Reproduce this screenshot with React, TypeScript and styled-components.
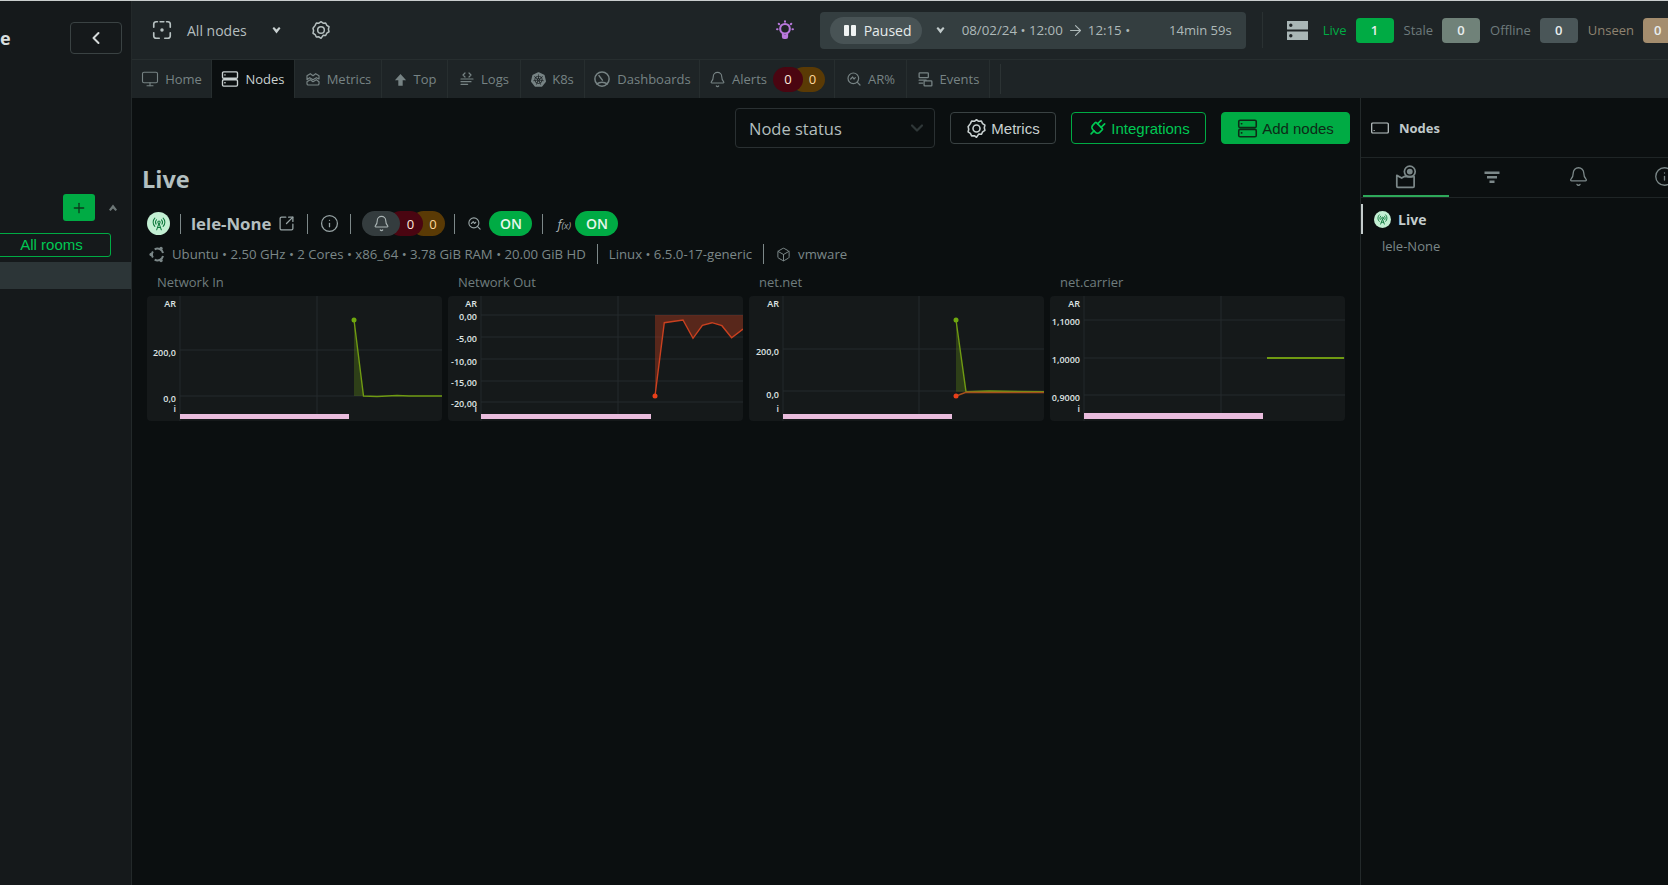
import React from "react";
import styled, { createGlobalStyle } from "styled-components";
import { Monitor, Bell, Plug, Info, SquareArrowOutUpRight, Box, RadioTower, ChevronLeft, ChevronDown, Plus, ArrowRight } from "lucide-react";
import { SiKubernetes } from "react-icons/si";

const Global = createGlobalStyle`
  html, body { margin: 0; padding: 0; height: 100%; background: #0b0f10; overflow: hidden; }
  body { font-family: "Open Sans", "Liberation Sans", sans-serif; color: #b8c2c2; }
  #root { height: 100%; }
  * { box-sizing: border-box; }
`;

const Page = styled.div`
  display: flex;
  width: 1668px;
  height: 885px;
  border-top: 1px solid #c9cdcd;
  overflow: hidden;
`;

const Sidebar = styled.aside`
  flex: 0 0 132px;
  background: #15191b;
  border-right: 1px solid #23292a;
  display: flex;
  flex-direction: column;
`;
const SideHead = styled.div`
  display: flex;
  align-items: center;
  justify-content: space-between;
  padding: 20px 9px 0 0;
  height: 53px;
`;
const SpaceName = styled.span`
  font-size: 18px;
  font-weight: 700;
  color: #d8dede;
  line-height: 24px;
  margin-top: 1px;
`;
const Collapse = styled.button`
  width: 52px;
  height: 32px;
  background: transparent;
  border: 1px solid #3a4243;
  border-radius: 4px;
  display: flex;
  align-items: center;
  justify-content: center;
  color: #d5dada;
  padding: 0;
`;
const RoomsHead = styled.div`
  display: flex;
  align-items: center;
  justify-content: flex-end;
  gap: 13px;
  margin-top: 140px;
  padding-right: 13px;
  color: #6c7676;
`;
const AddRoom = styled.button`
  width: 32px;
  height: 27px;
  background: #00ab44;
  border: 0;
  border-radius: 3px;
  color: #0b3a1c;
  display: flex;
  align-items: center;
  justify-content: center;
  padding: 0;
`;
const AllRooms = styled.div`
  margin: 12px 20px 0 -8px;
  height: 24px;
  border: 1px solid #00ab44;
  border-radius: 3px;
  color: #00c853;
  font-family: "Liberation Sans", sans-serif;
  font-size: 15px;
  line-height: 22px;
  text-align: center;
`;
const RoomRow = styled.div`
  margin-top: 5px;
  height: 27px;
  background: #2c3537;
`;

const Main = styled.div`
  flex: 1;
  min-width: 0;
  display: flex;
  flex-direction: column;
`;
const TopBar = styled.header`
  height: 59px;
  flex: none;
  background: #1e2426;
  border-bottom: 1px solid #272e2f;
  display: flex;
  align-items: center;
  padding-left: 19px;
`;
const ScopeLabel = styled.span`
  font-size: 14px;
  color: #b5bfbf;
  margin-left: 14px;
`;
const ScopeChevron = styled.span`
  display: flex;
  margin-left: 25px;
  color: #c8d0d0;
`;
const GearWrap = styled.span`
  display: flex;
  margin-left: 30px;
  color: #b5bfbf;
`;
const Bulb = styled.span`
  display: flex;
  margin-left: auto;
  margin-right: 25px;
  color: #b878dc;
`;
const TimePicker = styled.div`
  width: 426px;
  height: 37px;
  background: #343e40;
  border-radius: 4px;
  display: flex;
  align-items: center;
  padding-left: 10px;
  font-size: 13px;
  color: #aeb9b9;
`;
const PausedPill = styled.div`
  width: 92px;
  height: 27px;
  background: #485355;
  border-radius: 14px;
  display: flex;
  align-items: center;
  gap: 8px;
  padding-left: 14px;
  font-size: 14px;
  color: #e6ebeb;
`;
const PauseGlyph = styled.span`
  display: flex;
  gap: 2px;
`;
const PauseBar = styled.i`
  display: block;
  width: 5px;
  height: 11px;
  border-radius: 1px;
  background: #f0f3f3;
`;
const TimeChevron = styled.span`
  display: flex;
  margin: 0 17px 0 14px;
  color: #c0caca;
`;
const TimeRange = styled.span`
  display: flex;
  align-items: center;
  gap: 4px;
  font-size: 13.300px;
`;
const Duration = styled.span`
  margin-left: auto;
  margin-right: 14px;
`;
const BarDivider = styled.i`
  display: block;
  width: 1px;
  height: 36px;
  background: #2a3132;
  margin: 0 24px 0 16px;
`;
const StatusGroup = styled.div`
  display: flex;
  align-items: center;
  flex: none;
`;
const StatusLabel = styled.span<{ $c: string; $first?: boolean }>`
  font-size: 13px;
  color: ${(p) => p.$c};
  margin-left: ${(p) => (p.$first ? 15 : 10)}px;
  margin-right: 9px;
`;
const StatusChip = styled.span<{ $c: string; $w?: number }>`
  width: ${(p) => p.$w ?? 38}px;
  height: 25px;
  flex: none;
  background: ${(p) => p.$c};
  border-radius: 4px;
  color: #e8eeee;
  font-size: 13px;
  font-weight: 600;
  display: flex;
  align-items: center;
  justify-content: center;
`;
const ClippedChip = styled(StatusChip)`
  border-radius: 4px 0 0 4px;
  justify-content: flex-start;
  padding-left: 11px;
`;

const TabBar = styled.nav`
  height: 38px;
  flex: none;
  background: #1e2426;
  display: flex;
`;
const Tab = styled.div<{ $w: number; $active?: boolean }>`
  flex: 0 0 ${(p) => p.$w}px;
  display: flex;
  align-items: center;
  justify-content: center;
  gap: 6px;
  font-size: 13px;
  color: ${(p) => (p.$active ? "#c9d1d1" : "#778384")};
  background: ${(p) => (p.$active ? "#0b0f10" : "transparent")};
  border-right: 1px solid #272e2f;
  white-space: nowrap;
`;
const TabEnd = styled.i`
  display: block;
  width: 1px;
  height: 30px;
  align-self: center;
  background: #2c3334;
  margin-left: 10px;
`;
const CountGroup = styled.span`
  display: flex;
`;
const Count = styled.span<{ $bg: string; $c: string; $w: number; $over?: boolean; $z: number }>`
  position: relative;
  z-index: ${(p) => p.$z};
  width: ${(p) => p.$w}px;
  height: 25px;
  border-radius: 13px;
  background: ${(p) => p.$bg};
  color: ${(p) => p.$c};
  font-size: 13px;
  display: flex;
  align-items: center;
  justify-content: center;
  margin-left: ${(p) => (p.$over ? "-12px" : "0")};
  padding-left: ${(p) => (p.$over ? "9px" : "0")};
`;

const Body = styled.div`
  flex: 1;
  min-height: 0;
  display: flex;
  background: #0b0f10;
`;
const Content = styled.main`
  flex: 0 0 1228px;
  padding: 10px 10px 0 15px;
`;
const Toolbar = styled.div`
  display: flex;
  justify-content: flex-end;
  align-items: center;
  height: 40px;
  gap: 15px;
`;
const SelectBox = styled.div`
  width: 200px;
  height: 40px;
  border: 1px solid #2a3032;
  border-radius: 4px;
  display: flex;
  align-items: center;
  justify-content: space-between;
  padding: 0 7px 0 13px;
  font-size: 16.500px;
  color: #b3bebe;
`;
const ActionButton = styled.button<{ $variant: "plain" | "outline" | "solid"; $w: number }>`
  width: ${(p) => p.$w}px;
  height: 32px;
  border-radius: 4px;
  display: flex;
  align-items: center;
  justify-content: center;
  gap: 4px;
  font-family: "Liberation Sans", sans-serif;
  font-size: 15px;
  padding: 0;
  border: 1px solid ${(p) => (p.$variant === "plain" ? "#3a4243" : "#00ab44")};
  color: ${(p) => (p.$variant === "plain" ? "#c9d1d1" : p.$variant === "outline" ? "#00c853" : "#0d2a17")};
  background: ${(p) => (p.$variant === "solid" ? "#00ab44" : "transparent")};
`;
const Title = styled.h1`
  margin: 17px 0 0 -5px;
  font-size: 23.500px;
  line-height: 28px;
  font-weight: 700;
  color: #b3bfc0;
`;
const NodeRow = styled.div`
  display: flex;
  align-items: center;
  height: 25px;
  margin-top: 18px;
`;
const NodeBadge = styled.span<{ $size: number }>`
  width: ${(p) => p.$size}px;
  height: ${(p) => p.$size}px;
  border-radius: 50%;
  background: #c3efd3;
  color: #0f7a3d;
  display: flex;
  align-items: center;
  justify-content: center;
  flex: none;
`;
const VSep = styled.i<{ $l: number; $r: number; $h?: number }>`
  display: block;
  flex: none;
  width: 1px;
  height: ${(p) => p.$h ?? 20}px;
  background: #7d8889;
  margin: 0 ${(p) => p.$r}px 0 ${(p) => p.$l}px;
`;
const NodeName = styled.span`
  font-size: 16.800px;
  font-weight: 700;
  color: #b4bfc0;
  margin-right: 7px;
`;
const MutedIcon = styled.span`
  display: flex;
  color: #97a3a4;
`;
const AlertPill = styled.span`
  display: flex;
  align-items: center;
`;
const BellSegment = styled.span`
  position: relative;
  z-index: 3;
  width: 38px;
  height: 25px;
  border-radius: 13px;
  background: #343c3e;
  color: #aab4b4;
  display: flex;
  align-items: center;
  justify-content: center;
`;
const OnPill = styled.span`
  width: 43px;
  height: 25px;
  border-radius: 13px;
  background: #00ab44;
  color: #e6f7ec;
  font-size: 14px;
  font-weight: 600;
  display: flex;
  align-items: center;
  justify-content: center;
  margin-left: 7px;
`;
const Fx = styled.span`
  display: flex;
  align-items: baseline;
  width: 15px;
  margin-right: -4px;
  font-size: 13px;
  font-style: italic;
  color: #a8b3b4;
`;
const FxArg = styled.span`
  font-size: 9px;
`;
const InfoRow = styled.div`
  display: flex;
  align-items: center;
  height: 20px;
  margin-top: 8px;
  margin-left: 2px;
  font-size: 13.200px;
  color: #7b8788;
  white-space: nowrap;
`;
const InfoText = styled.span<{ $l: number }>`
  margin-left: ${(p) => p.$l}px;
`;
const Charts = styled.section`
  display: grid;
  grid-template-columns: repeat(4, 1fr);
  gap: 6px;
  margin-top: 9px;
  margin-right: 5px;
`;
const ChartTitle = styled.div`
  font-size: 13px;
  line-height: 18px;
  color: #6f7d7e;
  padding-left: 10px;
  margin-bottom: 5px;
`;
const ChartCard = styled.div`
  height: 125px;
  background: #15191a;
  border-radius: 4px;
  overflow: hidden;
`;
const ChartSvg = styled.svg`
  display: block;
  width: 100%;
  height: 125px;
  font-family: "Open Sans", sans-serif;
  font-size: 9px;
  font-weight: 600;
  fill: #dfe4e4;
`;

const Panel = styled.aside`
  flex: 1;
  min-width: 0;
  border-left: 1px solid #23292a;
  overflow: hidden;
`;
const PanelHead = styled.div`
  height: 60px;
  border-bottom: 1px solid #1f2526;
  display: flex;
  align-items: center;
  gap: 10px;
  padding-left: 10px;
  font-size: 13px;
  font-weight: 700;
  color: #c0c9ca;
`;
const PanelTabs = styled.div`
  height: 40px;
  display: flex;
  border-bottom: 1px solid #1f2526;
  padding-left: 2px;
  width: 360px;
`;
const PanelTab = styled.div<{ $active?: boolean }>`
  flex: 0 0 86px;
  display: flex;
  align-items: center;
  justify-content: center;
  color: #7c8889;
  border-bottom: 2px solid ${(p) => (p.$active ? "#2ea85a" : "transparent")};
`;
const GroupRow = styled.div`
  display: flex;
  align-items: center;
  gap: 7px;
  height: 30px;
  margin-top: 6px;
  border-left: 2px solid #c4cccc;
  padding-left: 11px;
  font-size: 14px;
  font-weight: 700;
  color: #c3cccc;
`;
const NodeItem = styled.div`
  font-size: 13px;
  color: #7b8788;
  padding-left: 21px;
  margin-top: 2px;
  line-height: 20px;
`;

const Icon = ({ s = 18, children, vb = "0 0 24 24" }: { s?: number; children: React.ReactNode; vb?: string }) => (
  <svg width={s} height={s} viewBox={vb} fill="none" stroke="currentColor" strokeWidth={1.8} strokeLinecap="round" strokeLinejoin="round">
    {children}
  </svg>
);
const ServerIcon = ({ s = 18 }: { s?: number }) => (
  <Icon s={s}>
    <rect x="2" y="2.500" width="20" height="8.500" rx="1.500" />
    <rect x="2" y="13" width="20" height="8.500" rx="1.500" />
    <path d="M5 17h.5M5 6.500h.5" />
  </Icon>
);
const HexGear = ({ s = 20 }: { s?: number }) => (
  <Icon s={s}>
    <path d="M12 2l2.500 1.800 3.100-.2 1.400 2.800 2.600 1.700-.7 3 .7 3-2.600 1.700-1.400 2.800-3.100-.2L12 22l-2.500-1.800-3.100.2L5 17.600l-2.600-1.700.7-3-.7-3L5 6.400l1.400-2.800 3.100.2z" />
    <circle cx="12" cy="12" r="4" />
  </Icon>
);
const ScopeIcon = () => (
  <Icon s={22}>
    <path d="M7 3H5.500A2.500 2.500 0 0 0 3 5.500V9M17 3h1.500A2.500 2.500 0 0 1 21 5.500V9M3 15v3.500A2.500 2.500 0 0 0 5.500 21H9M21 15v3.500a2.500 2.500 0 0 1-2.500 2.500H15M10 3h4" />
    <circle cx="12" cy="12" r="1" fill="currentColor" />
  </Icon>
);
const BulbIcon = () => (
  <Icon s={20}>
    <g strokeWidth="2.500">
      <circle cx="12" cy="10.500" r="5.800" />
      <path d="M9.500 16.500v3.500a1.500 1.500 0 0 0 1.500 1.500h2a1.500 1.500 0 0 0 1.500-1.500v-3.500M9.500 19h5M12 1.500v.5M4.500 4.500l.5.5M19.500 4.500l-.5.5M2.500 11h.5M21.500 11h-.5" />
    </g>
  </Icon>
);
const MetricsIcon = () => (
  <Icon s={16}>
    <path d="M3 7l5-3 4 3 4-3 5 3v5l-4-2-5 3-5-3-4 3zM3 16l5-3 4 3 5-3 4 3v3a2 2 0 0 1-2 2H5a2 2 0 0 1-2-2z" />
  </Icon>
);
const TopIcon = () => (
  <svg width="15" height="15" viewBox="0 0 24 24" fill="currentColor"><path d="M12 3l9 10h-5.500v9h-7v-9H3z" /></svg>
);
const LogsIcon = () => (
  <Icon s={16}>
    <path d="M9 3L6 6l3 3M15 3l3 3-3 3M3 12h18M3 16h15M3 20h10" />
  </Icon>
);
const DashGauge = () => (
  <Icon s={18}>
    <circle cx="12" cy="12" r="9.500" strokeWidth="2" />
    <path d="M5 18.500c2-1.500 4.300-2.300 7-2.300s5 .8 7 2.300" strokeWidth="2" />
    <path d="M8 7.500l4.500 6" strokeWidth="2" />
  </Icon>
);
const ZoomPct = ({ s = 16 }: { s?: number }) => (
  <Icon s={s}>
    <circle cx="11" cy="11" r="8" />
    <path d="M21 21l-4.300-4.300M7 12l3-3 2 3 2-2" />
  </Icon>
);
const EventsIcon = () => (
  <Icon s={17}>
    <rect x="3" y="2.500" width="13" height="7" rx="1" />
    <path d="M3 13h10M3 17h5" />
    <rect x="10" y="14" width="11" height="7" rx="1" />
  </Icon>
);
const UbuntuIcon = () => (
  <svg width="17" height="17" viewBox="0 0 24 24" fill="none" stroke="currentColor">
    <path d="M8 4.800A8 8 0 0 1 19.800 10M19.800 14A8 8 0 0 1 8 19.200M5.500 16.300a8 8 0 0 1 0-8.600" strokeWidth="2.800" />
    <circle cx="3" cy="12" r="2.400" fill="currentColor" stroke="none" />
    <circle cx="17" cy="3.500" r="2.400" fill="currentColor" stroke="none" />
    <circle cx="17" cy="20.500" r="2.400" fill="currentColor" stroke="none" />
  </svg>
);
const FolderEye = () => (
  <Icon s={26}>
    <path d="M3.500 10.500L8 13l2.500-1.500 9 .2v8.800a1 1 0 0 1-1 1H4.500a1 1 0 0 1-1-1z" strokeWidth="1.600" />
    <circle cx="15.500" cy="7" r="5" strokeWidth="1.600" />
    <circle cx="15.500" cy="7" r="1.800" fill="currentColor" />
  </Icon>
);
const FilterIcon = () => (
  <svg width="16" height="14" viewBox="0 0 16 14" fill="currentColor">
    <rect x="0.500" y="1.500" width="15" height="2.500" />
    <rect x="3" y="6" width="10" height="2.500" />
    <rect x="5.500" y="10.500" width="5" height="2.500" />
  </svg>
);
const SmallChevron = () => (
  <svg width="9" height="7" viewBox="0 0 9 7" fill="currentColor"><path d="M0.500 1.200L2 0l2.500 2.500L7 0l1.500 1.200L4.500 6.500z" /></svg>
);
const SmallChevronUp = () => (
  <svg width="10" height="7" viewBox="0 0 9 7" fill="currentColor"><path d="M0.500 5.800L2 7l2.500-2.500L7 7l1.500-1.200L4.500 .5z" /></svg>
);
const StackIcon = () => (
  <svg width="21" height="21" viewBox="0 0 21 21" fill="#a9b6b6">
    <path fillRule="evenodd" d="M0 1h21v8.500H0zM5.500 5.200a1.700 1.700 0 1 1-3.400 0 1.700 1.700 0 0 1 3.400 0zM0 11.500h21V20H0zM5.500 15.700a1.700 1.700 0 1 1-3.400 0 1.700 1.700 0 0 1 3.400 0z" />
  </svg>
);
const RectIcon = () => (
  <Icon s={18} vb="0 0 18 12">
    <rect x="0.700" y="1" width="16.600" height="10" rx="1" strokeWidth="1.200" />
    <path d="M3 8.500h.3" strokeWidth="1" />
  </Icon>
);

type Series = { pts: [number, number][]; stroke: string; dot?: string; area?: string; areaBase?: number; width?: number };
type ChartDef = {
  title: string;
  axis: number;
  vgrid: number;
  grid: number[];
  labels: { y: number; t: string }[];
  barEnd: number;
  barTop?: number;
  series: Series[];
};

const charts: ChartDef[] = [
  {
    title: "Network In", axis: 33, vgrid: 170, grid: [54, 100], barEnd: 202,
    labels: [{ y: 60, t: "200,0" }, { y: 106, t: "0,0" }],
    series: [{
      pts: [[207, 24], [216.500, 100], [230, 100.500], [240, 100], [250, 99.500], [262, 100], [280, 100], [295, 100]],
      stroke: "#6f9a12", dot: "#6fa80f", area: "rgba(111,160,20,.28)", areaBase: 100,
    }],
  },
  {
    title: "Network Out", axis: 33, vgrid: 170, grid: [19, 41, 63, 85, 106], barEnd: 203,
    labels: [{ y: 24, t: "0,00" }, { y: 46, t: "-5,00" }, { y: 69, t: "-10,00" }, { y: 90, t: "-15,00" }, { y: 111, t: "-20,00" }],
    series: [{
      pts: [[207, 100], [216.300, 26.700], [235, 24], [245, 42.300], [254.400, 29.300], [264, 26.700], [273.900, 29.700], [283.600, 41.700], [295, 33]],
      stroke: "#c9401f", dot: "#e8401a", area: "rgba(190,60,30,.4)", areaBase: 19,
    }],
  },
  {
    title: "net.net", axis: 34, vgrid: 170, grid: [53, 95], barEnd: 203,
    labels: [{ y: 59, t: "200,0" }, { y: 102, t: "0,0" }],
    series: [
      {
        pts: [[207, 24], [217, 95.700], [240, 95], [295, 95.700]],
        stroke: "#6f9a12", dot: "#6fa80f", area: "rgba(111,160,20,.28)", areaBase: 95.700,
      },
      { pts: [[207, 100], [217, 96.300], [295, 96.500]], stroke: "#a5501c", dot: "#e8401a" },
    ],
  },
  {
    title: "net.carrier", axis: 34, vgrid: 171, grid: [24, 62, 99], barEnd: 213,
    barTop: 117,
    labels: [{ y: 29, t: "1,1000" }, { y: 67, t: "1,0000" }, { y: 105, t: "0,9000" }],
    series: [{ pts: [[217, 62], [294, 62]], stroke: "#6f9a12", width: 2 }],
  },
];

const Chart = ({ def }: { def: ChartDef }) => {
  const right = def.axis - 4;
  const barTop = def.barTop ?? 118;
  return (
    <div>
      <ChartTitle>{def.title}</ChartTitle>
      <ChartCard>
        <ChartSvg viewBox="0 0 295 125" preserveAspectRatio="none">
          <line x1={def.axis} x2={def.axis} y1="0" y2="125" stroke="#22282a" />
          <line x1={def.vgrid} x2={def.vgrid} y1="0" y2="118" stroke="#252b2c" />
          {def.grid.map((y) => (
            <line key={y} x1={def.axis} x2="295" y1={y} y2={y} stroke="#252b2c" />
          ))}
          <text x={right} y="11" textAnchor="end">AR</text>
          {def.labels.map((l) => (
            <text key={l.t} x={right} y={l.y} textAnchor="end">{l.t}</text>
          ))}
          <text x={right} y="116" textAnchor="end">i</text>
          {def.series.map((s, i) => (
            <g key={i}>
              {s.area && (
                <polygon
                  points={`${s.pts[0][0]},${s.areaBase} ${s.pts.map((p) => p.join(",")).join(" ")} ${s.pts[s.pts.length - 1][0]},${s.areaBase}`}
                  fill={s.area}
                />
              )}
              <polyline points={s.pts.map((p) => p.join(",")).join(" ")} fill="none" stroke={s.stroke} strokeWidth={s.width ?? 1.400} />
              {s.dot && <circle cx={s.pts[0][0]} cy={s.pts[0][1]} r="2.500" fill={s.dot} />}
            </g>
          ))}
          <rect x={def.axis} y={barTop} width={def.barEnd - def.axis} height={123 - barTop} fill="#e9bcdd" />
        </ChartSvg>
      </ChartCard>
    </div>
  );
};

export default function App() {
  return (
    <Page>
      <Global />
      <Sidebar>
        <SideHead>
          <SpaceName>e</SpaceName>
          <Collapse><ChevronLeft size={20} strokeWidth={2.400} /></Collapse>
        </SideHead>
        <RoomsHead>
          <AddRoom><Plus size={16} strokeWidth={2} /></AddRoom>
          <SmallChevronUp />
        </RoomsHead>
        <AllRooms>All rooms</AllRooms>
        <RoomRow />
      </Sidebar>
      <Main>
        <TopBar>
          <ScopeIcon />
          <ScopeLabel>All nodes</ScopeLabel>
          <ScopeChevron><SmallChevron /></ScopeChevron>
          <GearWrap><HexGear /></GearWrap>
          <Bulb><BulbIcon /></Bulb>
          <TimePicker>
            <PausedPill>
              <PauseGlyph><PauseBar /><PauseBar /></PauseGlyph>
              Paused
            </PausedPill>
            <TimeChevron><SmallChevron /></TimeChevron>
            <TimeRange>08/02/24 • 12:00 <ArrowRight size={17} strokeWidth={1.500} /> 12:15 •</TimeRange>
            <Duration>14min 59s</Duration>
          </TimePicker>
          <BarDivider />
          <StatusGroup>
            <StackIcon />
            <StatusLabel $c="#00ab44" $first>Live</StatusLabel>
            <StatusChip $c="#00ab44">1</StatusChip>
            <StatusLabel $c="#6e7b7c">Stale</StatusLabel>
            <StatusChip $c="#708279">0</StatusChip>
            <StatusLabel $c="#6e7b7c">Offline</StatusLabel>
            <StatusChip $c="#4a5658">0</StatusChip>
            <StatusLabel $c="#8f8370">Unseen</StatusLabel>
            <ClippedChip $c="#a48d6e" $w={25}>0</ClippedChip>
          </StatusGroup>
        </TopBar>
        <TabBar>
          <Tab $w={80}><Monitor size={18} strokeWidth={1.500} />Home</Tab>
          <Tab $w={83} $active><ServerIcon />Nodes</Tab>
          <Tab $w={87}><MetricsIcon />Metrics</Tab>
          <Tab $w={66}><TopIcon />Top</Tab>
          <Tab $w={73}><LogsIcon />Logs</Tab>
          <Tab $w={64}><SiKubernetes size={15} />K8s</Tab>
          <Tab $w={115}><DashGauge />Dashboards</Tab>
          <Tab $w={135}>
            <Bell size={17} strokeWidth={1.600} />Alerts
            <CountGroup>
              <Count $bg="#4a0511" $c="#ffe9dc" $w={30} $z={2}>0</Count>
              <Count $bg="#5a3a05" $c="#ffd89a" $w={34} $over $z={1}>0</Count>
            </CountGroup>
          </Tab>
          <Tab $w={72}><ZoomPct />AR%</Tab>
          <Tab $w={83}><EventsIcon />Events</Tab>
          <TabEnd />
        </TabBar>
        <Body>
          <Content>
            <Toolbar>
              <SelectBox>
                Node status
                <ChevronDown size={20} color="#2f3738" strokeWidth={2.600} />
              </SelectBox>
              <ActionButton $variant="plain" $w={106}><HexGear s={21} />Metrics</ActionButton>
              <ActionButton $variant="outline" $w={135}><Plug size={20} style={{ transform: "rotate(45deg)" }} />Integrations</ActionButton>
              <ActionButton $variant="solid" $w={129}><ServerIcon s={21} />Add nodes</ActionButton>
            </Toolbar>
            <Title>Live</Title>
            <NodeRow>
              <NodeBadge $size={23}><RadioTower size={14} strokeWidth={1.800} /></NodeBadge>
              <VSep $l={10} $r={10} />
              <NodeName>lele-None</NodeName>
              <MutedIcon><SquareArrowOutUpRight size={17} strokeWidth={1.800} /></MutedIcon>
              <VSep $l={12} $r={12} />
              <MutedIcon><Info size={19} strokeWidth={1.600} /></MutedIcon>
              <VSep $l={11} $r={11} />
              <AlertPill>
                <BellSegment><Bell size={17} strokeWidth={1.600} /></BellSegment>
                <Count $bg="#4a0511" $c="#ffe9dc" $w={35} $over $z={2}>0</Count>
                <Count $bg="#5a3a05" $c="#ffd89a" $w={34} $over $z={1}>0</Count>
              </AlertPill>
              <VSep $l={9} $r={12} />
              <MutedIcon><ZoomPct s={15} /></MutedIcon>
              <OnPill>ON</OnPill>
              <VSep $l={10} $r={14} />
              <Fx>f<FxArg>(x)</FxArg></Fx>
              <OnPill>ON</OnPill>
            </NodeRow>
            <InfoRow>
              <UbuntuIcon />
              <InfoText $l={6}>Ubuntu • 2.50 GHz • 2 Cores • x86_64 • 3.78 GiB RAM • 20.00 GiB HD</InfoText>
              <VSep $l={11} $r={11} />
              Linux • 6.5.0-17-generic
              <VSep $l={11} $r={12} />
              <Box size={15} strokeWidth={1.600} />
              <InfoText $l={7}>vmware</InfoText>
            </InfoRow>
            <Charts>
              {charts.map((c) => <Chart key={c.title} def={c} />)}
            </Charts>
          </Content>
          <Panel>
            <PanelHead><RectIcon />Nodes</PanelHead>
            <PanelTabs>
              <PanelTab $active><FolderEye /></PanelTab>
              <PanelTab><FilterIcon /></PanelTab>
              <PanelTab><Bell size={21} strokeWidth={1.500} /></PanelTab>
              <PanelTab><Info size={21} strokeWidth={1.500} /></PanelTab>
            </PanelTabs>
            <GroupRow>
              <NodeBadge $size={17}><RadioTower size={11} strokeWidth={2} /></NodeBadge>
              Live
            </GroupRow>
            <NodeItem>lele-None</NodeItem>
          </Panel>
        </Body>
      </Main>
    </Page>
  );
}
